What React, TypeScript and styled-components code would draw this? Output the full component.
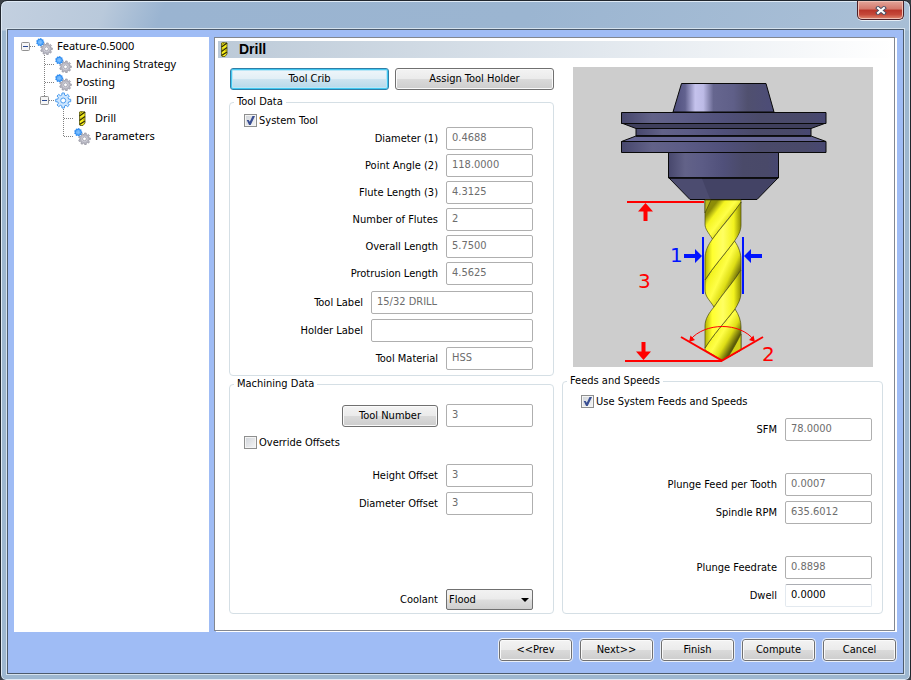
import React, { useId } from "react";
import styled, { createGlobalStyle, css } from "styled-components";

const ui = `11px/14px "DejaVu Sans Condensed", Tahoma, "Liberation Sans", sans-serif`;

const GlobalStyle = createGlobalStyle`
  *, *::before, *::after { box-sizing: border-box; }
  body { margin: 0; background: #3a3f45; font: ${ui}; color: #000; }
  button, input, select { font: inherit; color: inherit; margin: 0; }
`;

const Window = styled.main`
  display: flex;
  flex-direction: column;
  min-height: 100vh;
  padding: 0 6px 6px;
  border: 1px solid #20262e;
  border-radius: 7px 7px 6px 6px;
  background:
    linear-gradient(#ffffff00 29px, #9db7d0 30px),
    linear-gradient(112deg, #c3d0e0 0%, #b9c9db 9%, #9ab4d1 14%, #9bb5d1 45%, #a9bfd6 75%, #9fb9d3 88%, #bccbdd 93%, #bccbdd 100%);
  box-shadow: inset 0 0 0 1px #dfeaf5;
`;

const TitleBar = styled.header`
  display: flex;
  justify-content: flex-end;
  align-items: flex-start;
  height: 28px;
  flex: none;
`;

const CloseButton = styled.button`
  display: grid;
  place-items: center;
  width: 47px;
  height: 19px;
  padding: 0;
  border: 1px solid #4b2028;
  border-top: 0;
  border-radius: 0 0 5px 5px;
  background: linear-gradient(#e3a59a 0, #d4776a 45%, #b9352a 50%, #c5483a 75%, #e08a72 100%);
  box-shadow: inset 0 0 0 1px #f0bfb4, 0 1px 0 #e6eef6;
`;

const Client = styled.div`
  display: flex;
  flex-direction: column;
  flex: 1;
  padding: 7px 6px 12px;
  border: 1px solid #4c5b6d;
  outline: 1px solid #d5e2ee;
  background: #9fbcf5;
`;

const Workspace = styled.div`
  display: grid;
  grid-template-columns: 195px minmax(0, 1fr);
  gap: 5px;
  flex: 1;
`;

const TreePanel = styled.nav`
  padding-left: 3px;
  background: #fff;
  font: 11px/18px "Noto Sans", "Segoe UI", sans-serif;
`;

const TreeRow = styled.div`
  display: flex;
  align-items: center;
  height: 18px;
  white-space: nowrap;
`;

const Rail = styled.svg`
  flex: none;
  width: 19px;
  height: 18px;
`;

const TreeIcon = styled.svg`
  flex: none;
  width: 17px;
  height: 17px;
  margin-right: 4px;
`;

const Panel = styled.section`
  display: flex;
  flex-direction: column;
  margin: 0 2px 1px 0;
  padding: 3px 0 0 3px;
  border: 1px solid #828790;
  box-shadow: 2px 1px #fff;
  background: #fff;
`;

const PanelTitle = styled.h1`
  display: flex;
  align-items: center;
  gap: 8px;
  height: 17px;
  margin: 0;
  font: bold 14px/17px "Liberation Sans", Arial, sans-serif;
  background: linear-gradient(90deg, #bccad8, #fff);
`;

const Content = styled.div`
  display: grid;
  grid-template-columns: minmax(0, 325fr) minmax(0, 321fr);
  gap: 8px;
  flex: 1;
  padding: 9px 11px 16px;
`;

const Column = styled.div<{ $gap: number }>`
  display: flex;
  flex-direction: column;
  gap: ${(p) => p.$gap}px;
`;

const Toolbar = styled.div`
  display: flex;
  gap: 6px;
  padding: 1px 0 4px 1px;
`;

const Button = styled.button<{ $focused?: boolean; $width?: number }>`
  height: 22px;
  padding: 0 4px;
  ${(p) => (p.$width ? css`width: ${p.$width}px;` : css`flex: 1;`)}
  border: 1px solid #707070;
  border-radius: 3px;
  background: linear-gradient(#f3f3f3, #ebebeb 48%, #dadada 52%, #cdcdcd);
  box-shadow: inset 0 0 0 1px #fafafa;
  white-space: nowrap;
  ${(p) =>
    p.$focused &&
    css`
      border-color: #2f7ea6;
      background: linear-gradient(#f0f6fa, #e2eff6 48%, #cde4f0 52%, #b5d8ea);
      box-shadow: inset 0 0 0 1px #42c8f2, inset 0 0 0 2px #b9e6f6;
    `}
`;

const Group = styled.fieldset<{ $fill?: boolean }>`
  display: flex;
  flex-direction: column;
  min-width: 0;
  margin: 0;
  padding: 0;
  border: 1px solid #d5dfe5;
  border-radius: 4px;
  ${(p) => p.$fill && css`flex: 1;`}
`;

const Legend = styled.legend`
  height: 14px;
  margin-left: 4px;
  padding: 0 3px;
`;

const GroupBody = styled.div<{ $top: number; $left: number; $right: number; $bottom: number }>`
  display: flex;
  flex-direction: column;
  flex: 1;
  padding: ${(p) => `${p.$top}px ${p.$right}px ${p.$bottom}px ${p.$left}px`};
`;

const Fields = styled.div<{ $gap: number; $before?: number; $end?: boolean }>`
  display: flex;
  flex-direction: column;
  gap: ${(p) => p.$gap}px;
  margin-top: ${(p) => (p.$end ? "auto" : `${p.$before ?? 0}px`)};
`;

const FieldRow = styled.div`
  display: flex;
  justify-content: flex-end;
  align-items: center;
  gap: 8px;
`;

const FieldLabel = styled.label`
  white-space: nowrap;
`;

const TextBox = styled.input<{ $wide?: boolean }>`
  width: ${(p) => (p.$wide ? 162 : 87)}px;
  height: 23px;
  padding: 0 5px 3px;
  border: 1px solid #e3e9ef;
  border-top-color: #abadb3;
  border-radius: 2px;
  background: #fff;
  &:disabled {
    border-color: #afafaf;
    color: #6d6d6d;
  }
`;

const CheckLabel = styled.label`
  display: flex;
  align-items: center;
  align-self: flex-start;
  gap: 2px;
  height: 13px;
`;

const CheckBox = styled.input`
  appearance: none;
  display: grid;
  place-items: center;
  flex: none;
  width: 13px;
  height: 13px;
  border: 1px solid #8e8f8f;
  background: linear-gradient(135deg, #cfd3d9, #f6f6f6);
  box-shadow: inset 0 0 0 1px #f4f4f4;
  &:checked::after {
    content: "";
    width: 9px;
    height: 9px;
    background: #3a4f93;
    clip-path: polygon(8% 45%, 30% 45%, 42% 65%, 72% 0, 100% 0, 52% 100%, 34% 100%);
  }
`;

const SelectWrap = styled.div`
  display: grid;
  align-items: center;
  width: 87px;
  > * { grid-area: 1 / 1; }
  > svg { justify-self: end; margin-right: 4px; pointer-events: none; }
`;

const Select = styled.select`
  appearance: none;
  width: 100%;
  height: 21px;
  padding: 0 2px;
  border: 1px solid #707070;
  border-radius: 2px;
  background: linear-gradient(#f2f2f2, #ebebeb 48%, #dddddd 52%, #cfcfcf);
`;

const Illustration = styled.svg`
  display: block;
  align-self: center;
  width: 300px;
  max-width: 100%;
  height: auto;
`;

const Footer = styled.footer`
  display: flex;
  justify-content: flex-end;
  gap: 8px;
  padding: 7px 1px 0 0;
  > button { outline: 1px solid #e9eef7; }
`;

/* ---------- icons ---------- */

function gearPath(cx: number, cy: number, r: number, inner: number, teeth: number) {
  const pts: string[] = [];
  for (let i = 0; i < teeth; i++) {
    const a = (i / teeth) * Math.PI * 2;
    const s = (Math.PI * 2) / teeth;
    [[-0.32, inner], [-0.2, r], [0.2, r], [0.32, inner]].forEach(([o, rad]) => {
      pts.push(`${(cx + Math.cos(a + o * s) * rad).toFixed(2)},${(cy + Math.sin(a + o * s) * rad).toFixed(2)}`);
    });
  }
  return `M${pts.join("L")}Z`;
}

const GearsIcon = () => (
  <TreeIcon viewBox="0 0 17 17" aria-hidden>
    <path d={gearPath(10.5, 10.8, 5.9, 4.4, 9)} fill="#b9b9c4" stroke="#8e8e9b" strokeWidth=".7" />
    <circle cx="10.5" cy="10.8" r="2.9" fill="#d6d6de" />
    <circle cx="10.5" cy="10.8" r="1.9" fill="#fff" stroke="#8e8e9b" strokeWidth=".7" />
    <path d={gearPath(4.2, 4.2, 4.1, 3.5, 9)} fill="#2f8cf0" />
    <circle cx="4.2" cy="4.2" r="2.5" fill="#5cacfb" />
    <path d="M2.2 4.2h4M4.2 2.2v4" stroke="#8cc6ff" strokeWidth=".7" />
  </TreeIcon>
);

const BlueGearIcon = () => (
  <TreeIcon viewBox="0 0 17 17" aria-hidden>
    <path d={gearPath(8.2, 8.5, 7.6, 5.6, 8)} fill="#cde6ff" stroke="#4a9bee" strokeWidth="1" />
    <circle cx="8.2" cy="8.5" r="2.5" fill="#fff" stroke="#4a9bee" />
  </TreeIcon>
);

const BitShape = () => (
  <>
    <path d="M5.5 2 6.5 1.500 11 2V13l-2 2.500H6L5.500 14Z" fill="#f7ee1c" stroke="#57540a" strokeWidth=".8" />
    <path d="M5.500 6 11 2M5.500 10.500 11 6.500M5.500 14.500 11 11" stroke="#2e2c05" strokeWidth="1.300" fill="none" />
    <path d="M6 3.500 8 2M10 8.500v2M7 7.500v1.500" stroke="#8b8410" fill="none" />
  </>
);

const DrillIcon = () => (
  <TreeIcon viewBox="0 0 17 17" aria-hidden>
    <BitShape />
  </TreeIcon>
);

const TitleBit = styled.svg`
  flex: none;
  width: 13px;
  height: 17px;
`;

type RailKind = "blank" | "line" | "tee" | "elbow" | "open" | "openLast";

function TreeRail({ kind }: { kind: RailKind }) {
  const paths: Record<RailKind, string> = {
    blank: "",
    line: "M8.500 0V18",
    tee: "M8.500 0V18M9 9.500H19",
    elbow: "M8.500 0V9M9 9.500H19",
    open: "M13 9.500H19",
    openLast: "M8.500 0V5M13 9.500H19",
  };
  const box = kind === "open" || kind === "openLast";
  return (
    <Rail viewBox="0 0 19 18" aria-hidden>
      <path d={paths[kind]} stroke="#808080" strokeDasharray="1 1" fill="none" />
      {box && (
        <>
          <rect x="4.500" y="5.500" width="8" height="8" rx="1" fill="#f6f6f6" stroke="#919191" />
          <path d="M6 9.500h5" stroke="#2b4a93" />
        </>
      )}
    </Rail>
  );
}

const treeItems: { label: string; rails: RailKind[]; icon: React.ReactNode }[] = [
  { label: "Feature-0.5000", rails: ["open"], icon: <GearsIcon /> },
  { label: "Machining Strategy", rails: ["blank", "tee"], icon: <GearsIcon /> },
  { label: "Posting", rails: ["blank", "tee"], icon: <GearsIcon /> },
  { label: "Drill", rails: ["blank", "openLast"], icon: <BlueGearIcon /> },
  { label: "Drill", rails: ["blank", "blank", "tee"], icon: <DrillIcon /> },
  { label: "Parameters", rails: ["blank", "blank", "elbow"], icon: <GearsIcon /> },
];

/* ---------- tool drawing ---------- */

function ToolDrawing() {
  return (
    <Illustration viewBox="0 0 300 300" role="img" aria-label="Drill dimensions">
      <defs>
        <linearGradient id="cone">
          <stop offset="0" stopColor="#4d4d7c" />
          <stop offset=".12" stopColor="#62628f" />
          <stop offset=".22" stopColor="#c4c2ec" />
          <stop offset=".3" stopColor="#bdbbe6" />
          <stop offset=".4" stopColor="#66668f" />
          <stop offset=".6" stopColor="#5f5f88" />
          <stop offset=".74" stopColor="#50506f" />
          <stop offset="1" stopColor="#4c4c78" />
        </linearGradient>
        <linearGradient id="flange">
          <stop offset="0" stopColor="#47476c" />
          <stop offset=".15" stopColor="#626288" />
          <stop offset=".3" stopColor="#5c5c86" />
          <stop offset=".5" stopColor="#50507a" />
          <stop offset=".68" stopColor="#4a4a69" />
          <stop offset=".9" stopColor="#494969" />
          <stop offset="1" stopColor="#474772" />
        </linearGradient>
        <linearGradient id="land">
          <stop offset="0" stopColor="#b5b500" />
          <stop offset=".2" stopColor="#ffff2e" />
          <stop offset=".5" stopColor="#ffff62" />
          <stop offset=".8" stopColor="#f2f21e" />
          <stop offset="1" stopColor="#8e8e00" />
        </linearGradient>
        <linearGradient id="flute" x1="0.18" y1="0.22" x2="0.78" y2="0.72">
          <stop offset="0" stopColor="#8c8c08" />
          <stop offset=".22" stopColor="#f4f420" />
          <stop offset=".5" stopColor="#ffff48" />
          <stop offset=".74" stopColor="#dede16" />
          <stop offset="1" stopColor="#5c5c08" />
        </linearGradient>
      </defs>
      <rect width="300" height="300" fill="#cdcdcd" />
      <g stroke="#090909" strokeWidth="1" strokeLinejoin="round">
        <path d="M108.500 16.500H193L201 45H100Z" fill="url(#cone)" />
        <path d="M48.500 56H253L238 61.500H63Z" fill="#3f3f5c" />
        <path d="M63 61.500H238V69H63Z" fill="url(#flange)" />
        <path d="M63 69H238L253 74.500H48.500Z" fill="#666695" />
        <path d="M63 69H238" strokeWidth="1.500" />
        <path d="M48.500 45.500H253V56.500H48.500Z" fill="url(#flange)" />
        <path d="M48.500 74.500H253V85.500H48.500Z" fill="url(#flange)" />
        <path d="M95.500 85.500H205.500V111H95.500Z" fill="url(#flange)" />
        <path d="M96 111H205L184 132.500H117Z" fill="#434365" />
        <path d="M97 111.500H129L137 132H117.500Z" fill="#4c4c70" stroke="none" />
        <path d="M96 111H205" strokeWidth="1.500" />
      </g>
      <g stroke="#4b4b10" strokeWidth=".7" strokeLinejoin="round">
        <path d="M132 133H168V136C160 146 150 158 139.500 172 135 165 132 162 132 157Z" fill="url(#flute)" />
        <path d="M132 133H138L132 146Z" fill="#b8b81a" />
        <path d="M161.500 174C166 180 168 187 168 193V203C160 216 150 226 141 240 136 232 132 230 132 222V213C140 200 152 187 161.500 174Z" fill="url(#flute)" />
        <path d="M162 242C166 248 168 254 168 260V283L149 293.500 132 283V281C140 268 152 255 162 242Z" fill="url(#flute)" />
        <path d="M168 267V283L155 290C160 282 164 275 168 267Z" fill="#d1d119" />
        <path d="M168 135V158C168 164 165 169 161.500 174 152 187 140 200 132 213V192C132 184 135 178 139.500 172 148 160 160 148 168 135Z" fill="url(#land)" />
        <path d="M168 203V226C168 232 165 237 162 242 152 255 140 268 132 281V259C132 252 136 246 141 240 150 226 160 216 168 203Z" fill="url(#land)" />
      </g>
      <g fill="none" stroke="#f00" strokeWidth="2">
        <path d="M54 135H131M52 294H149M108 270 149 293.500 190 270" />
        <path d="M117 273C132 255 167 255 181 273" strokeWidth="1" />
      </g>
      <g fill="#f00">
        <path d="M72.500 136 80 144.500H74.500V154H70.500V144.500H65ZM70.500 293 78 284.500H72.500V275H68.500V284.500H63Z" />
        <path d="M116 275 117.500 268.500 122 273ZM182 275 180.500 268.500 176 273Z" />
      </g>
      <g fill="#0014ff">
        <path d="M129 170h2v57h-2ZM169 170h2v57h-2Z" />
        <path d="M129 189 122 196V191H111V187H122V182ZM171 189 178 196V191H189V187H178V182Z" />
      </g>
      <g fontFamily='"DejaVu Sans", Verdana, sans-serif' fontSize="20">
        <text x="97" y="195" fill="#0014ff">1</text>
        <text x="65" y="221" fill="#f00">3</text>
        <text x="189" y="294" fill="#f00">2</text>
      </g>
    </Illustration>
  );
}

/* ---------- form parts ---------- */

interface FieldProps {
  label: string;
  value: string;
  wide?: boolean;
  enabled?: boolean;
}

function Field({ label, value, wide, enabled }: FieldProps) {
  const id = useId();
  return (
    <FieldRow>
      <FieldLabel htmlFor={id}>{label}</FieldLabel>
      <TextBox id={id} defaultValue={value} $wide={wide} disabled={!enabled} />
    </FieldRow>
  );
}

function Check({ label, checked }: { label: string; checked?: boolean }) {
  return (
    <CheckLabel>
      <CheckBox type="checkbox" defaultChecked={checked} />
      {label}
    </CheckLabel>
  );
}

export default function App() {
  return (
    <>
      <GlobalStyle />
      <Window>
        <TitleBar>
          <CloseButton aria-label="Close">
            <svg width="12" height="9" viewBox="0 0 12 9" aria-hidden>
              <path d="M3 2 9 7M9 2 3 7" stroke="#4c4f63" strokeWidth="4" strokeLinecap="square" />
              <path d="M3 2 9 7M9 2 3 7" stroke="#fff" strokeWidth="2" strokeLinecap="square" />
            </svg>
          </CloseButton>
        </TitleBar>
        <Client>
          <Workspace>
            <TreePanel aria-label="Features">
              {treeItems.map((item, i) => (
                <TreeRow key={i}>
                  {item.rails.map((kind, j) => (
                    <TreeRail key={j} kind={kind} />
                  ))}
                  {item.icon}
                  {item.label}
                </TreeRow>
              ))}
            </TreePanel>
            <Panel>
              <PanelTitle>
                <TitleBit viewBox="2 0 13 17" aria-hidden>
                  <BitShape />
                </TitleBit>
                Drill
              </PanelTitle>
              <Content>
                <Column $gap={1}>
                  <Toolbar>
                    <Button $focused>Tool Crib</Button>
                    <Button>Assign Tool Holder</Button>
                  </Toolbar>
                  <Group>
                    <Legend>Tool Data</Legend>
                    <GroupBody $top={5} $left={14} $right={20} $bottom={5}>
                      <Check label="System Tool" checked />
                      <Fields $gap={4}>
                        <Field label="Diameter (1)" value="0.4688" />
                        <Field label="Point Angle (2)" value="118.0000" />
                        <Field label="Flute Length (3)" value="4.3125" />
                        <Field label="Number of Flutes" value="2" />
                        <Field label="Overall Length" value="5.7500" />
                        <Field label="Protrusion Length" value="4.5625" />
                      </Fields>
                      <Fields $gap={5} $before={6}>
                        <Field label="Tool Label" value="15/32 DRILL" wide />
                        <Field label="Holder Label" value="" wide />
                        <Field label="Tool Material" value="HSS" />
                      </Fields>
                    </GroupBody>
                  </Group>
                  <Group $fill>
                    <Legend>Machining Data</Legend>
                    <GroupBody $top={13} $left={14} $right={20} $bottom={3}>
                      <FieldRow>
                        <Button $width={96}>Tool Number</Button>
                        <TextBox aria-label="Tool Number" defaultValue="3" disabled />
                      </FieldRow>
                      <Fields $gap={0} $before={9}>
                        <Check label="Override Offsets" />
                      </Fields>
                      <Fields $gap={5} $before={15}>
                        <Field label="Height Offset" value="3" />
                        <Field label="Diameter Offset" value="3" />
                      </Fields>
                      <Fields $gap={0} $end>
                        <FieldRow>
                          <FieldLabel htmlFor="coolant">Coolant</FieldLabel>
                          <SelectWrap>
                            <Select id="coolant" defaultValue="Flood">
                              <option>Flood</option>
                              <option>Mist</option>
                              <option>Off</option>
                            </Select>
                            <svg width="8" height="4" viewBox="0 0 8 4" aria-hidden>
                              <path d="M0 0h8L4 4Z" />
                            </svg>
                          </SelectWrap>
                        </FieldRow>
                      </Fields>
                    </GroupBody>
                  </Group>
                </Column>
                <Column $gap={7}>
                  <ToolDrawing />
                  <Group $fill>
                    <Legend>Feeds and Speeds</Legend>
                    <GroupBody $top={7} $left={18} $right={10} $bottom={6}>
                      <Check label="Use System Feeds and Speeds" checked />
                      <Fields $gap={5} $before={10}>
                        <Field label="SFM" value="78.0000" />
                      </Fields>
                      <Fields $gap={5} $before={32}>
                        <Field label="Plunge Feed per Tooth" value="0.0007" />
                        <Field label="Spindle RPM" value="635.6012" />
                      </Fields>
                      <Fields $gap={5} $before={32}>
                        <Field label="Plunge Feedrate" value="0.8898" />
                        <Field label="Dwell" value="0.0000" enabled />
                      </Fields>
                    </GroupBody>
                  </Group>
                </Column>
              </Content>
            </Panel>
          </Workspace>
          <Footer>
            {["<<Prev", "Next>>", "Finish", "Compute", "Cancel"].map((label) => (
              <Button key={label} $width={73}>
                {label}
              </Button>
            ))}
          </Footer>
        </Client>
      </Window>
    </>
  );
}
